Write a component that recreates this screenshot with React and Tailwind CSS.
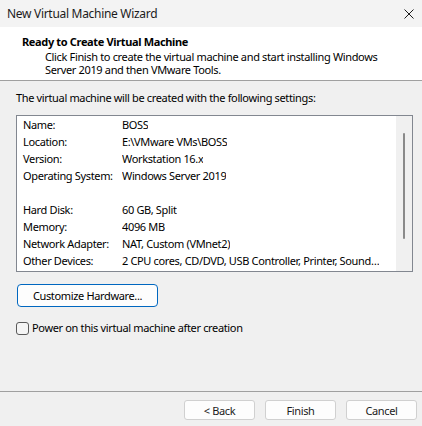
import React from "react"

const ROWS = [
  ["Name:", "BOSS"],
  ["Location:", "E:\\VMware VMs\\BOSS"],
  ["Version:", "Workstation 16.x"],
  ["Operating System:", "Windows Server 2019"],
  ["", ""],
  ["Hard Disk:", "60 GB, Split"],
  ["Memory:", "4096 MB"],
  ["Network Adapter:", "NAT, Custom (VMnet2)"],
  ["Other Devices:", "2 CPU cores, CD/DVD, USB Controller, Printer, Sound\u2026"],
]

function WizButton({ children }) {
  return (
    <button className="w-[71px] h-[20px] rounded-[3px] border border-[#d0d0d0] bg-[#fdfdfd] text-[11px] tracking-[-0.35px] leading-none text-[#1b1b1b]">
      {children}
    </button>
  )
}

export default function App() {
  return (
    <div
      className="w-[422px] h-[426px] bg-[#f0f0f0] flex flex-col text-[11px] tracking-[-0.35px] text-black overflow-hidden"
      style={{ fontFamily: "'Noto Sans', sans-serif" }}
    >
      {/* title bar */}
      <div className="h-[27px] bg-[#f3f3f3] flex items-center justify-between pl-[7px] pr-[8px]">
        <span className="text-[12px] tracking-[-0.3px] text-[#1b1b1b]">New Virtual Machine Wizard</span>
        <svg width="10" height="10" viewBox="0 0 10 10" className="text-[#1b1b1b]">
          <path d="M0.5 0.5 L9.5 9.5 M9.5 0.5 L0.5 9.5" stroke="currentColor" strokeWidth="1" />
        </svg>
      </div>

      {/* header */}
      <div className="h-[54px] bg-white border-b border-[#a0a0a0] pl-[22px] pt-[8px]">
        <div className="font-bold leading-[14px]">Ready to Create Virtual Machine</div>
        <div className="ml-[23px] mt-[1px] leading-[13px] whitespace-nowrap">
          Click Finish to create the virtual machine and start installing Windows
          <br />
          Server 2019 and then VMware Tools.
        </div>
      </div>

      {/* body */}
      <div className="flex-1 flex flex-col pt-[10px] pl-[16px] pr-[9px]">
        <div className="leading-[14px]">The virtual machine will be created with the following settings:</div>

        <div className="mt-[10px] h-[157px] border border-[#828790] bg-white flex overflow-hidden">
          <div className="flex-1 pt-[1px] pl-[6px] overflow-hidden">
            {ROWS.map(([label, value], i) => (
              <div key={i} className="h-[17px] flex items-center whitespace-nowrap">
                <span className="w-[99px] shrink-0">{label}</span>
                <span className="overflow-hidden">{value}</span>
              </div>
            ))}
          </div>
          <div className="w-[16px] bg-[#f0f0f0] flex justify-center pt-[17px]">
            <div className="w-[2px] h-[106px] bg-[#8a8a8a] rounded-full" />
          </div>
        </div>

        <button className="mt-[12px] w-[141px] h-[23px] rounded-[4px] border border-[#0067c0] bg-[#fdfdfd] text-[11px] tracking-[-0.35px] leading-none ml-[1px]">
          Customize Hardware...
        </button>

        <label className="mt-[14px] flex items-center gap-[3px] h-[14px]">
          <span className="w-[13px] h-[13px] rounded-[3px] border border-[#5a5a5a] bg-[#f5f5f5]" />
          <span>Power on this virtual machine after creation</span>
        </label>
      </div>

      {/* footer */}
      <div className="border-t border-[#a0a0a0] pt-[8px] pb-[6px] pr-[5px] flex justify-end gap-[10px]">
        <WizButton>&lt; Back</WizButton>
        <WizButton>Finish</WizButton>
        <WizButton>Cancel</WizButton>
      </div>
    </div>
  )
}
